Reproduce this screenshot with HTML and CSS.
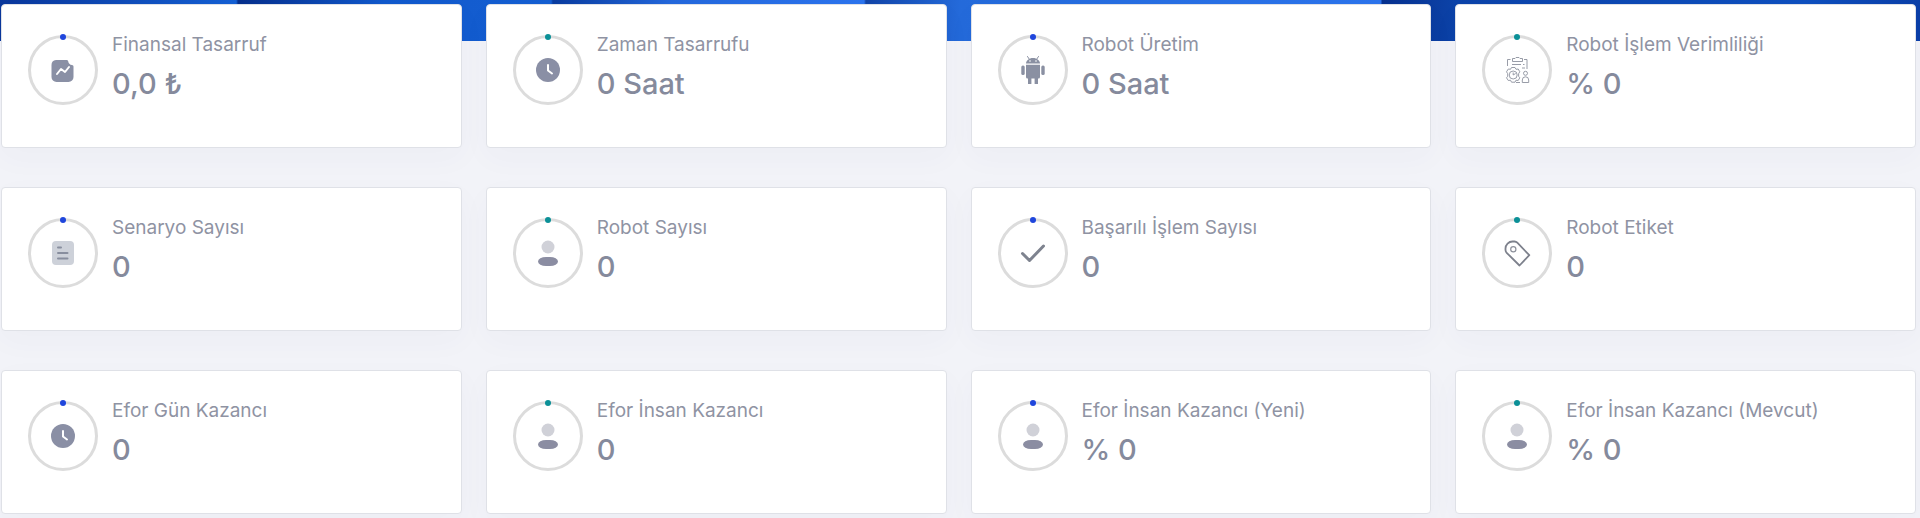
FILE: index.html
```html
<!DOCTYPE html>
<html lang="tr">
<head>
    <meta charset="UTF-8">
    <meta name="viewport" content="width=device-width, initial-scale=1.0">
    <title>Robot Özeti</title>
    <link rel="stylesheet" href="styles.css">
</head>
<body>
    <!-- Shared icons -->
    <svg class="sprite" aria-hidden="true">
        <symbol id="icon-chart" viewBox="0 0 28 28">
            <path fill="#8a90a5" d="M7 4h11a1.500 1.500 0 0 1 1.200 1.200A4.500 4.500 0 0 0 23 9a1.500 1.500 0 0 1 1.500 1.500V21a5 5 0 0 1-5 5H7.500a5 5 0 0 1-5-5V9A5 5 0 0 1 7 4z"/>
            <path fill="none" stroke="#fff" stroke-width="2" stroke-linecap="round" stroke-linejoin="round" d="M8 18l4-5 4 3 4-5"/>
        </symbol>
        <symbol id="icon-clock" viewBox="0 0 28 28">
            <circle cx="14" cy="14" r="12" fill="#8a8fa5"/>
            <path fill="none" stroke="#fff" stroke-width="2" stroke-linecap="round" stroke-linejoin="round" d="M14 9v5.500l4 3"/>
        </symbol>
        <symbol id="icon-android" viewBox="0 0 28 28">
            <g fill="#8a90a2">
                <path d="M7 7.500C7 4.500 10 2 14 2s7 2.500 7 5.500z"/>
                <path d="M7 8.800h14V21a1.500 1.500 0 0 1-1.500 1.500h-11A1.500 1.500 0 0 1 7 21z"/>
                <rect x="2.300" y="9.500" width="3.400" height="9.500" rx="1.500"/>
                <rect x="22.300" y="9.500" width="3.400" height="9.500" rx="1.500"/>
                <rect x="9" y="20" width="3.400" height="9" rx="1.500"/>
                <rect x="15.600" y="20" width="3.400" height="9" rx="1.500"/>
            </g>
            <path stroke="#8a90a2" stroke-linecap="round" d="M8.500 0.500l2 3M19.500 0.500l-2 3"/>
            <circle cx="11" cy="5" r="0.800" fill="#fff"/>
            <circle cx="17" cy="5" r="0.800" fill="#fff"/>
        </symbol>
        <symbol id="icon-report" viewBox="0 0 28 28">
            <g fill="none" stroke="#8d929e" stroke-width="0.900">
                <path d="M4.500 10V3.500h3M21 3.500h3V13"/>
                <path d="M9.500 2.500h2.500l1-1h3l1 1h2.500v3h-10zM9 8.500h9M20 8.500h1.500M19 12h3"/>
                <path d="M8.500 11.500h3.500l1 1.800 2.200-.3 1.600 2.800-1.200 1.900v2.600l1.200 1.500-1.600 2.700-2.200-.3-1 2H8.500l-1-2-2.200.3-1.800-2.700 1.200-1.500v-2.600L3.500 15.800 5.300 13l2.200.3z"/>
                <circle cx="10.200" cy="19" r="4"/>
                <path d="M10.200 16.500v2.500l2.500-1.500"/>
                <circle cx="22.500" cy="17.300" r="2"/>
                <path d="M19.300 26.500v-2.500a3.200 3.200 0 0 1 6.400 0v2.500zM13 26.500h4"/>
            </g>
        </symbol>
        <symbol id="icon-document" viewBox="0 0 28 28">
            <rect x="3" y="2" width="22" height="24" rx="4" fill="#cdd1d9"/>
            <path stroke="#888e9e" stroke-width="2" stroke-linecap="round" d="M9 8.500h3M9 14h9.500M9 19.500h9.500"/>
        </symbol>
        <symbol id="icon-user" viewBox="0 0 28 28">
            <circle cx="14" cy="8" r="6.500" fill="#d0d1d8"/>
            <rect x="4" y="18" width="20" height="9" rx="8" ry="4.500" fill="#8b8da2"/>
        </symbol>
        <symbol id="icon-check" viewBox="0 0 28 28">
            <path fill="none" stroke="#7e838f" stroke-width="3" stroke-linecap="round" stroke-linejoin="round" d="M3.500 14.500L10.500 21.500L24.500 7"/>
        </symbol>
        <symbol id="icon-tag" viewBox="0 0 28 28">
            <path fill="none" stroke="#7d818c" stroke-width="1.800" stroke-linejoin="round" d="M2.500 11V9.500a7 7 0 0 1 7-7h2a4 4 0 0 1 2.800 1.200L26.300 16.200L16.500 26.500L3.700 13.800A4 4 0 0 1 2.500 11z"/>
            <circle cx="10.300" cy="10.300" r="2.600" fill="none" stroke="#8d919b" stroke-width="1.200"/>
        </symbol>
    </svg>

    <main class="dashboard">
        <section class="card">
            <div class="ring"><svg class="icon"><use href="#icon-chart"/></svg></div>
            <div class="info">
                <h2 class="label">Finansal Tasarruf</h2>
                <p class="value">0,0 ₺</p>
            </div>
        </section>
        <section class="card">
            <div class="ring teal"><svg class="icon"><use href="#icon-clock"/></svg></div>
            <div class="info">
                <h2 class="label">Zaman Tasarrufu</h2>
                <p class="value">0 Saat</p>
            </div>
        </section>
        <section class="card">
            <div class="ring"><svg class="icon"><use href="#icon-android"/></svg></div>
            <div class="info">
                <h2 class="label">Robot Üretim</h2>
                <p class="value">0 Saat</p>
            </div>
        </section>
        <section class="card">
            <div class="ring teal"><svg class="icon"><use href="#icon-report"/></svg></div>
            <div class="info">
                <h2 class="label">Robot İşlem Verimliliği</h2>
                <p class="value">% 0</p>
            </div>
        </section>

        <section class="card">
            <div class="ring"><svg class="icon"><use href="#icon-document"/></svg></div>
            <div class="info">
                <h2 class="label">Senaryo Sayısı</h2>
                <p class="value">0</p>
            </div>
        </section>
        <section class="card">
            <div class="ring teal"><svg class="icon"><use href="#icon-user"/></svg></div>
            <div class="info">
                <h2 class="label">Robot Sayısı</h2>
                <p class="value">0</p>
            </div>
        </section>
        <section class="card">
            <div class="ring"><svg class="icon"><use href="#icon-check"/></svg></div>
            <div class="info">
                <h2 class="label">Başarılı İşlem Sayısı</h2>
                <p class="value">0</p>
            </div>
        </section>
        <section class="card">
            <div class="ring teal"><svg class="icon"><use href="#icon-tag"/></svg></div>
            <div class="info">
                <h2 class="label">Robot Etiket</h2>
                <p class="value">0</p>
            </div>
        </section>

        <section class="card">
            <div class="ring"><svg class="icon"><use href="#icon-clock"/></svg></div>
            <div class="info">
                <h2 class="label">Efor Gün Kazancı</h2>
                <p class="value">0</p>
            </div>
        </section>
        <section class="card">
            <div class="ring teal"><svg class="icon"><use href="#icon-user"/></svg></div>
            <div class="info">
                <h2 class="label">Efor İnsan Kazancı</h2>
                <p class="value">0</p>
            </div>
        </section>
        <section class="card">
            <div class="ring"><svg class="icon"><use href="#icon-user"/></svg></div>
            <div class="info">
                <h2 class="label">Efor İnsan Kazancı (Yeni)</h2>
                <p class="value">% 0</p>
            </div>
        </section>
        <section class="card">
            <div class="ring teal"><svg class="icon"><use href="#icon-user"/></svg></div>
            <div class="info">
                <h2 class="label">Efor İnsan Kazancı (Mevcut)</h2>
                <p class="value">% 0</p>
            </div>
        </section>
    </main>
</body>
</html>
```
FILE: styles.css
```css
* {
    box-sizing: border-box;
}
body {
    margin: 0;
    font-family: Inter, "Noto Sans", sans-serif;
    color: #858a9c;
    background: #f2f3f8;
}
.sprite {
    display: none;
}
.dashboard {
    display: grid;
    grid-template-columns: repeat(4, 1fr);
    gap: 39px 24px;
    padding: 4px 4px 5px 1px;
    /* blue header strip behind the first row */
    background: linear-gradient(90deg,
        #0a379b 0%, #1560d4 12.300%,
        #062f8c 12.400%, #1159cc 20%, #155fd2 28.700%,
        #0a3c9f 28.800%, #2468dc 35%, #2c74ee 45%,
        #1245a8 45.100%, #246ada 50%, #2c74ec 71.900%,
        #07318f 72%, #0c43a9 76%, #0f50bf 94%, #0b3fa8 100%) 0 0 / 100% 41px no-repeat;
}
.card {
    display: flex;
    align-items: flex-start;
    gap: 14px;
    min-height: 144px;
    padding: 30px 26px;
    background: #fff;
    border: 1px solid #dfe1e7;
    border-radius: 4px;
    box-shadow: 0 10px 30px rgba(50, 50, 130, 0.03);
}
.ring {
    position: relative;
    display: flex;
    flex: none;
    align-items: center;
    justify-content: center;
    width: 70px;
    height: 70px;
    border: 3px solid #dcdcdc;
    border-radius: 50%;
}
/* marker at the start of the ring */
.ring::before {
    content: "";
    position: absolute;
    top: -4px;
    left: 50%;
    width: 6px;
    height: 6px;
    margin-left: -3px;
    border-radius: 50%;
    background: #1f46dc;
}
.ring.teal::before {
    background: #0b9097;
}
.icon {
    width: 28px;
    height: 28px;
    overflow: visible;
}
.label {
    margin: 0;
    font-size: 19px;
    font-weight: 400;
    line-height: 20px;
    color: #8f93a3;
}
.value {
    margin: 9px 0 0;
    font-size: 29px;
    font-weight: 500;
    line-height: 40px;
}
```
